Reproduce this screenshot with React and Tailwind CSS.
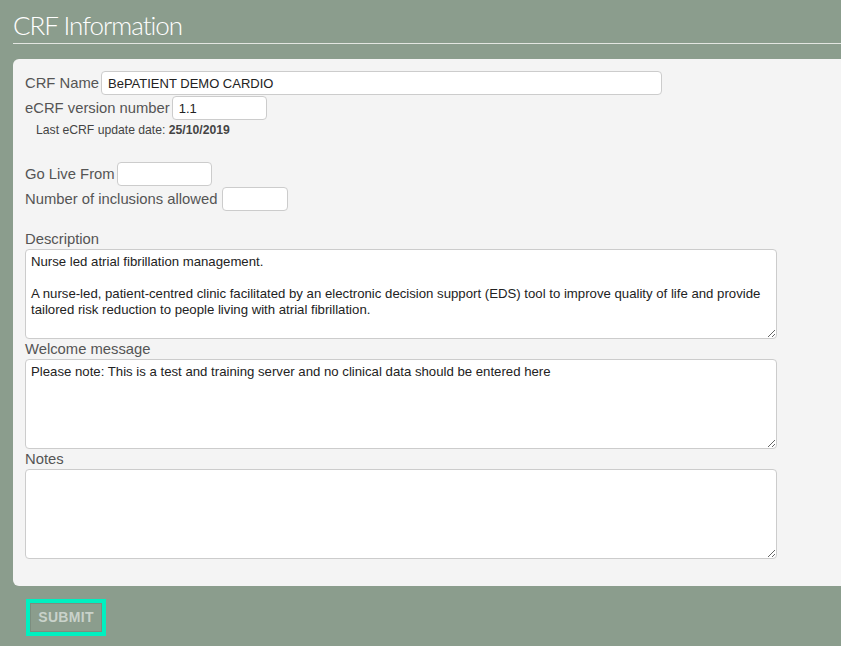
import { useState } from "react";

const inputCls =
  "h-[24px] rounded-[4px] border border-[#cccccc] bg-white px-[6px] text-[13px] text-[#222] outline-none";
const areaCls =
  "block w-[752px] rounded-[4px] border border-[#cccccc] bg-white px-[5px] py-[4px] text-[13.2px] leading-[16px] text-[#222] outline-none resize";

export default function App() {
  const [nom, setNom] = useState("BePATIENT DEMO CARDIO");
  const [version, setVersion] = useState("1.1");
  const [goLive, setGoLive] = useState("");
  const [inclusions, setInclusions] = useState("");
  const [description, setDescription] = useState(
    "Nurse led atrial fibrillation management.\n\nA nurse-led, patient-centred clinic facilitated by an electronic decision support (EDS) tool to improve quality of life and provide tailored risk reduction to people living with atrial fibrillation."
  );
  const [bienvenue, setBienvenue] = useState(
    "Please note: This is a test and training server and no clinical data should be entered here"
  );
  const [notes, setNotes] = useState("");

  return (
    <div
      className="min-h-screen w-full overflow-hidden bg-[#8b9d8d] pl-[13px]"
      style={{ fontFamily: '"Liberation Sans", Arial, sans-serif' }}
    >
      <h1
        className="pt-[9px] text-[26px] leading-[32px] font-light text-white tracking-[-1px]"
        style={{ fontFamily: 'Lato, Roboto, "Liberation Sans", sans-serif' }}
      >
        CRF Information
      </h1>
      <div className="mt-[2px] h-px w-full bg-[#e3e6e1]" />

      <form
        className="mt-[15px] h-[527px] rounded-l-[6px] bg-[#f4f4f4] pl-[12px] pt-[12px] text-[14.8px] text-[#555]"
        onSubmit={(e) => e.preventDefault()}
      >
        <div className="flex items-center gap-[2px]">
          <label htmlFor="crf_nom">CRF Name</label>
          <input
            id="crf_nom"
            className={`${inputCls} w-[561px]`}
            value={nom}
            onChange={(e) => setNom(e.target.value)}
          />
        </div>
        <div className="mt-[1px] flex items-center gap-[2px]">
          <label htmlFor="version">eCRF version number</label>
          <input
            id="version"
            className={`${inputCls} w-[95px]`}
            value={version}
            onChange={(e) => setVersion(e.target.value)}
          />
        </div>
        <p className="mt-[2px] pl-[11px] text-[12.2px] leading-[16px] text-[#444]">
          Last eCRF update date: <b>25/10/2019</b>
        </p>

        <div className="mt-[24px] flex items-center gap-[2px]">
          <label htmlFor="go_live">Go Live From</label>
          <input
            id="go_live"
            className={`${inputCls} w-[95px]`}
            value={goLive}
            onChange={(e) => setGoLive(e.target.value)}
          />
        </div>
        <div className="mt-[1px] flex items-center gap-[5px]">
          <label htmlFor="inclusions">Number of inclusions allowed</label>
          <input
            id="inclusions"
            className={`${inputCls} w-[66px]`}
            value={inclusions}
            onChange={(e) => setInclusions(e.target.value)}
          />
        </div>

        <label htmlFor="description" className="mt-[18px] block leading-[20px]">
          Description
        </label>
        <textarea
          id="description"
          className={`${areaCls} h-[90px]`}
          value={description}
          onChange={(e) => setDescription(e.target.value)}
        />

        <label htmlFor="bienvenue" className="block leading-[20px]">
          Welcome message
        </label>
        <textarea
          id="bienvenue"
          className={`${areaCls} h-[90px]`}
          value={bienvenue}
          onChange={(e) => setBienvenue(e.target.value)}
        />

        <label htmlFor="notes" className="block leading-[20px]">
          Notes
        </label>
        <textarea
          id="notes"
          className={`${areaCls} h-[90px]`}
          value={notes}
          onChange={(e) => setNotes(e.target.value)}
        />
      </form>

      <div className="mt-[13px] ml-[13px] inline-block border-[4px] border-[#00f0c0]">
        <button
          type="button"
          className="block h-[29px] w-[72px] border border-[#7d8d7f] bg-[#8b9d8d] text-[14px] font-bold tracking-[0.3px] text-[#c9d2ca]"
        >
          SUBMIT
        </button>
      </div>
    </div>
  );
}
